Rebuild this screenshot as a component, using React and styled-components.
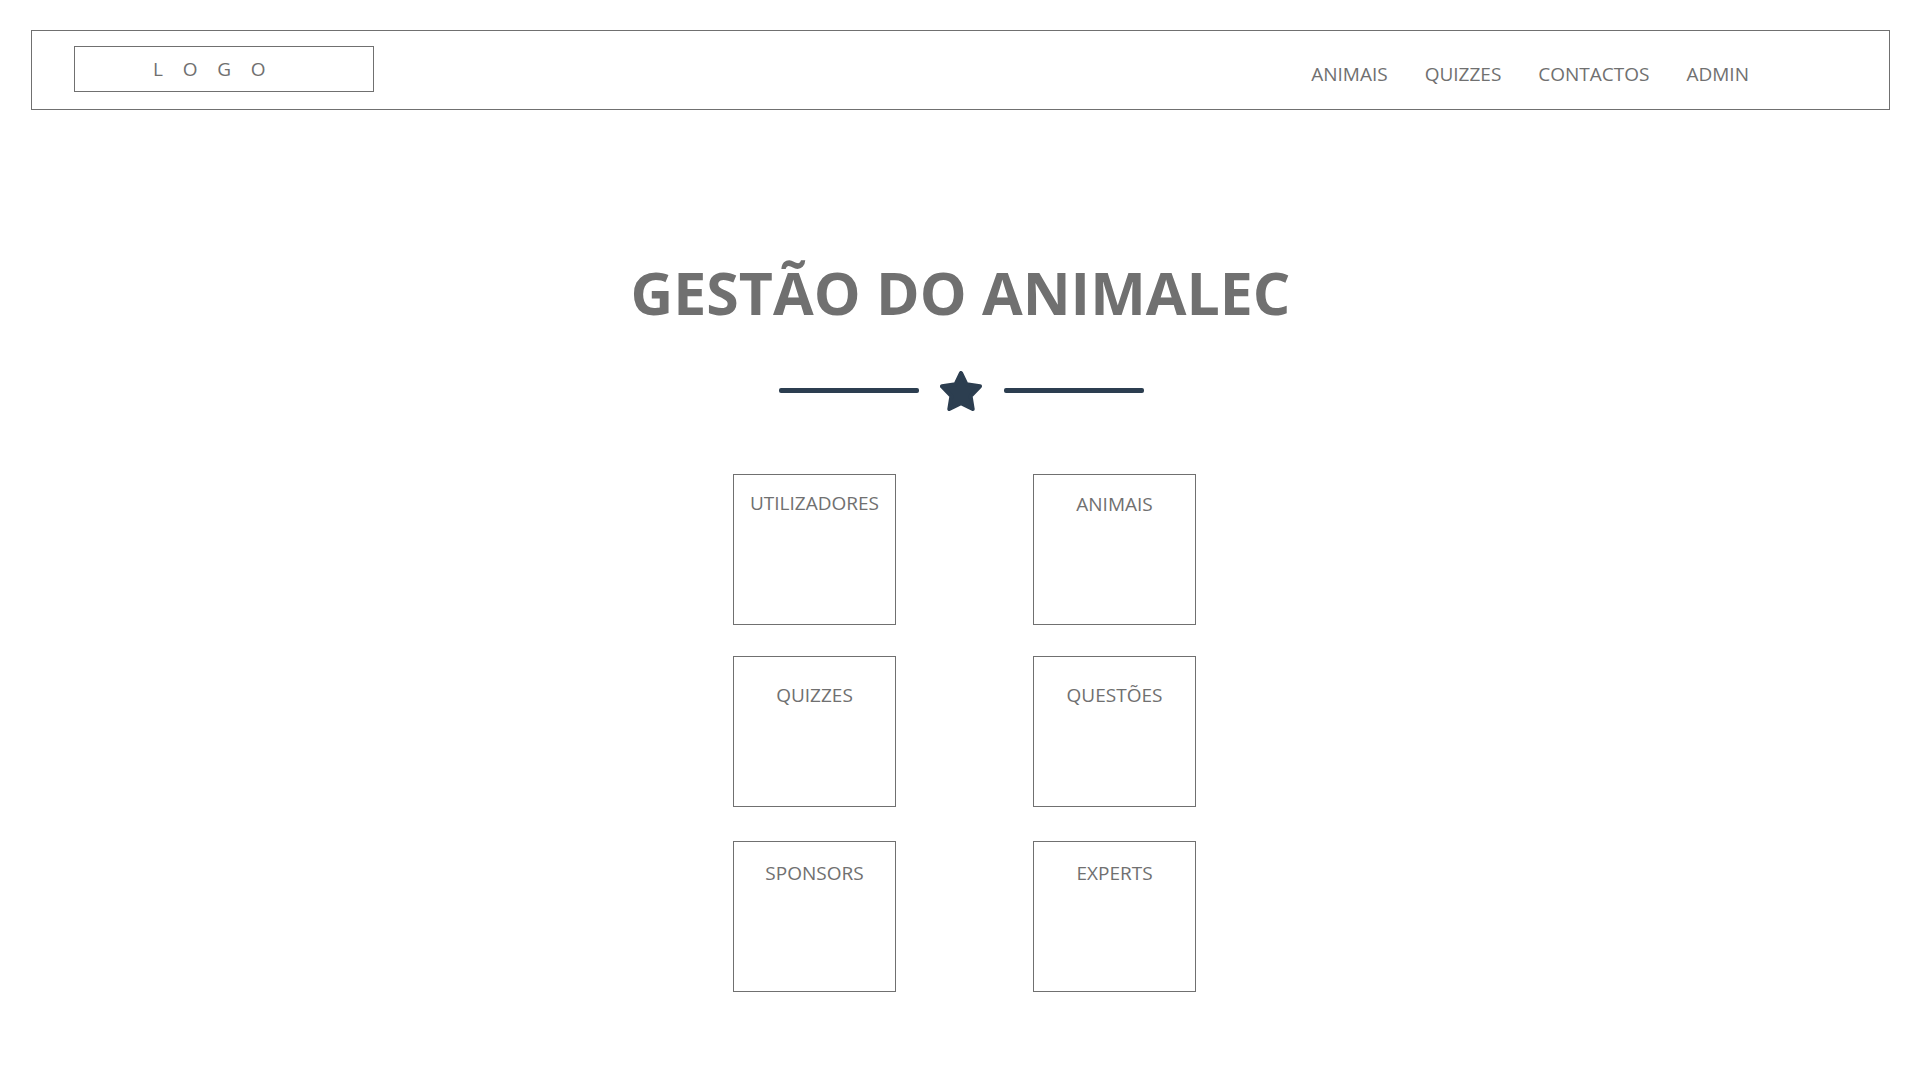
import React from 'react';
import styled, { createGlobalStyle } from 'styled-components';

const GlobalStyle = createGlobalStyle`
  *, *::before, *::after { box-sizing: border-box; }
  body {
    margin: 0;
    background: #ffffff;
    color: #707070;
    font-family: "Segoe UI", "Open Sans", sans-serif;
    font-size: 19px;
    line-height: 28px;
  }
`;

const Page = styled.div`
  display: flex;
  flex-direction: column;
  padding: 30px 30px 88px 31px;
`;

const Header = styled.header`
  display: flex;
  justify-content: space-between;
  align-items: center;
  padding: 15px 140px 17px 42px;
  border: 1px solid #707070;
`;

const Logo = styled.a`
  width: 300px;
  padding: 8px 78px;
  border: 1px solid #707070;
  color: inherit;
  text-decoration: none;
  white-space: pre;
`;

const Nav = styled.nav`
  display: flex;
  gap: 37px;
  padding-top: 10px;
`;

const NavLink = styled.a`
  color: inherit;
  text-decoration: none;
`;

const Main = styled.main`
  display: flex;
  flex-direction: column;
  align-items: center;
`;

const Title = styled.h1`
  margin: 142px 0 0;
  font-size: 59px;
  line-height: 80px;
  font-weight: 700;
  text-align: center;
`;

const Divider = styled.div`
  display: flex;
  align-items: flex-start;
  gap: 21px;
  margin-top: 39px;
  padding-left: 2px;
  color: #2c3e50;
`;

const Line = styled.span`
  width: 140px;
  height: 5px;
  margin-top: 17px;
  border-radius: 2px;
  background: currentColor;
`;

const Cards = styled.div`
  display: grid;
  grid-template-columns: 163px 163px;
  grid-template-rows: 151px 154px 151px;
  gap: 31px 137px;
  align-items: start;
  margin-top: 63px;
  padding-left: 8px;
`;

const Card = styled.a`
  height: 151px;
  padding-top: ${({ $inset }) => $inset}px;
  border: 1px solid #707070;
  color: inherit;
  text-align: center;
  text-decoration: none;
`;

const navItems = ['ANIMAIS', 'QUIZZES', 'CONTACTOS', 'ADMIN'];

const cards = [
  { label: 'UTILIZADORES', inset: 14 },
  { label: 'ANIMAIS', inset: 15 },
  { label: 'QUIZZES', inset: 24 },
  { label: 'QUESTÕES', inset: 24 },
  { label: 'SPONSORS', inset: 17 },
  { label: 'EXPERTS', inset: 17 },
];

function Star() {
  return (
    <svg width="43" height="40" viewBox="0 0 43 40" aria-hidden="true">
      <path
        d="M21 2 L26.5 13.3 L40 15.3 L30.6 25 L32.7 38 L21 32.3 L9.3 38 L11.4 25 L2 15.3 L15.5 13.3 Z"
        fill="currentColor"
        stroke="currentColor"
        strokeWidth="4"
        strokeLinejoin="round"
      />
    </svg>
  );
}

export default function App() {
  return (
    <>
      <GlobalStyle />
      <Page>
        <Header>
          <Logo href="#inicio">{'L    O    G    O'}</Logo>
          <Nav>
            {navItems.map((item) => (
              <NavLink key={item} href={`#${item.toLowerCase()}`}>{item}</NavLink>
            ))}
          </Nav>
        </Header>
        <Main>
          <Title>GESTÃO DO ANIMALEC</Title>
          <Divider>
            <Line />
            <Star />
            <Line />
          </Divider>
          <Cards>
            {cards.map(({ label, inset }) => (
              <Card key={label} href={`#gerir-${label.toLowerCase()}`} $inset={inset}>{label}</Card>
            ))}
          </Cards>
        </Main>
      </Page>
    </>
  );
}
